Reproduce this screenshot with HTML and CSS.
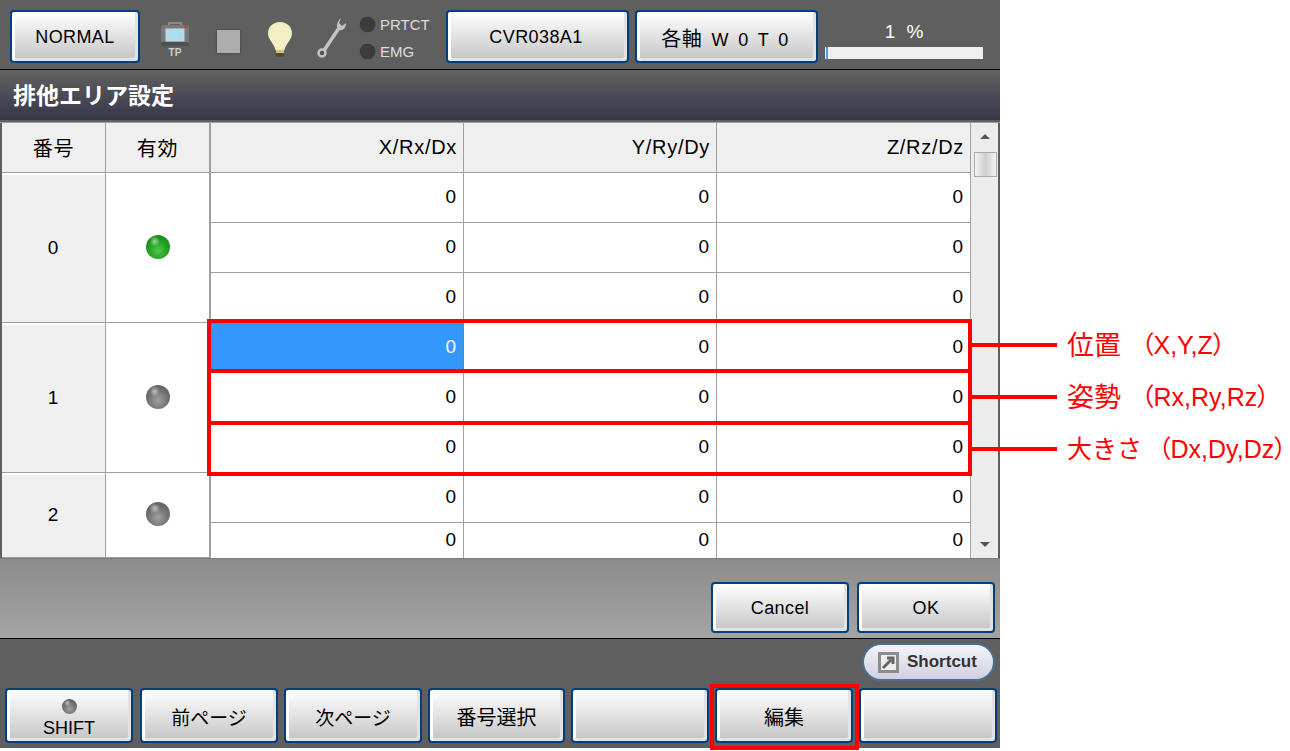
FILE: index.html
```html
<!DOCTYPE html>
<html lang="ja">

<head>
    <meta charset="UTF-8">
    <title>排他エリア設定</title>
    <link rel="stylesheet" href="styles.css">
</head>

<body>
    <div class="screen">
        <!-- Status bar -->
        <div class="status-bar">
            <button class="btn btn-mode">NORMAL</button>
            <div class="icon-tp">
                <svg width="30" height="26" viewBox="0 0 30 26">
                    <path d="M9 4V2H21V4" fill="none" stroke="#8a8a8a" stroke-width="2"/>
                    <rect x="1" y="4" width="28" height="21" rx="3" fill="#787878"/>
                    <rect x="1" y="21" width="28" height="4" rx="2" fill="#4e4e4e"/>
                    <rect x="6" y="8" width="18" height="12" fill="#a8def0" stroke="#d5d5d5"/>
                    <rect x="24" y="4" width="4" height="3" fill="#b04848"/>
                </svg>
                <span>TP</span>
            </div>
            <div class="icon-stop"></div>
            <svg class="icon-bulb" width="26" height="38" viewBox="0 0 26 38">
                <path d="M13 1C6 1 1 6 1 12.500C1 19 7 22 8.500 29H17.500C19 22 25 19 25 12.500C25 6 20 1 13 1Z" fill="#f5efc4"/>
                <rect x="9" y="29" width="8" height="3" fill="#d8c060"/>
                <rect x="9" y="32" width="8" height="4" rx="1" fill="#4a4a3c"/>
            </svg>
            <svg class="icon-wrench" width="30" height="42" viewBox="0 0 30 42">
                <path d="M6 35L22 11" stroke="#c4c4c4" stroke-width="3.500" fill="none"/>
                <path d="M24 1L22 6L25 9L29 6C29 11 26 14 22 13C19 12 19 5 24 1Z" fill="#c4c4c4"/>
                <circle cx="5" cy="36" r="3.500" fill="#555" stroke="#c4c4c4" stroke-width="2.500"/>
            </svg>
            <div class="lamps">
                <div class="lamp"><i></i>PRTCT</div>
                <div class="lamp"><i></i>EMG</div>
            </div>
            <button class="btn btn-job">CVR038A1</button>
            <button class="btn btn-job"><span class="jp">各軸</span> W 0 T 0</button>
            <div class="speed">
                <div class="speed-text">1 %</div>
                <div class="speed-bar"><div class="speed-fill"></div></div>
            </div>
        </div>

        <!-- Title -->
        <h1 class="title">排他エリア設定</h1>

        <!-- Table -->
        <div class="table-wrap">
            <div class="grid">
                <div class="head">番号</div>
                <div class="head head-thick">有効</div>
                <div class="head right">X/Rx/Dx</div>
                <div class="head right">Y/Ry/Dy</div>
                <div class="head right">Z/Rz/Dz</div>

                <div class="no span3">0</div>
                <div class="flag span3"><span class="led led-on"></span></div>
                <div class="val">0</div><div class="val">0</div><div class="val">0</div>
                <div class="val">0</div><div class="val">0</div><div class="val">0</div>
                <div class="val">0</div><div class="val">0</div><div class="val">0</div>

                <div class="no span3">1</div>
                <div class="flag span3"><span class="led"></span></div>
                <div class="val selected">0</div><div class="val">0</div><div class="val">0</div>
                <div class="val">0</div><div class="val">0</div><div class="val">0</div>
                <div class="val">0</div><div class="val">0</div><div class="val">0</div>

                <div class="no span2">2</div>
                <div class="flag span2"><span class="led"></span></div>
                <div class="val">0</div><div class="val">0</div><div class="val">0</div>
                <div class="val last">0</div><div class="val last">0</div><div class="val last">0</div>
            </div>
            <div class="scrollbar">
                <span class="arrow-up"></span>
                <span class="thumb"></span>
                <span class="arrow-down"></span>
            </div>
        </div>

        <!-- Dialog buttons -->
        <div class="dialog-bar">
            <button class="btn btn-dialog">Cancel</button>
            <button class="btn btn-dialog">OK</button>
        </div>

        <!-- Function keys -->
        <div class="bottom-bar">
            <div class="shortcut-row">
                <button class="shortcut">
                    <svg width="21" height="21" viewBox="0 0 21 21">
                        <rect x="1.500" y="1.500" width="18" height="18" fill="#eeeeee" stroke="#8c8c8c" stroke-width="3"/>
                        <path d="M5 16L13 8M9 6H15V12" stroke="#666666" stroke-width="3" fill="none"/>
                    </svg>
                    Shortcut
                </button>
            </div>
            <div class="keys">
                <button class="btn key key-shift"><span class="led led-small"></span>SHIFT</button>
                <button class="btn key key-page">前ページ</button>
                <button class="btn key key-page">次ページ</button>
                <button class="btn key key-narrow">番号選択</button>
                <button class="btn key"></button>
                <button class="btn key">編集</button>
                <button class="btn key"></button>
            </div>
        </div>
    </div>

    <!-- Annotations -->
    <div class="frame frame-1"></div>
    <div class="frame frame-2"></div>
    <div class="frame frame-3"></div>
    <div class="frame frame-key"></div>

    <div class="note note-1">
        <span class="note-line"></span>
        <span class="note-name name-wide">位置</span>
        <span class="note-args">（X,Y,Z）</span>
    </div>
    <div class="note note-2">
        <span class="note-line"></span>
        <span class="note-name name-wide">姿勢</span>
        <span class="note-args">（Rx,Ry,Rz）</span>
    </div>
    <div class="note note-3">
        <span class="note-line"></span>
        <span class="note-name">大きさ</span>
        <span class="note-args">（Dx,Dy,Dz）</span>
    </div>
</body>

</html>
```

FILE: styles.css
```css
/* General Styles */
body {
    margin: 0;
    background-color: #ffffff;
    font-family: "Liberation Sans", "Noto Sans CJK JP", sans-serif;
    color: #000000;
    overflow: hidden;
}

.screen {
    width: 1000px;
    height: 748px;
    background-color: #5f5f5f;
    display: flex;
    flex-direction: column;
}

/* Buttons */
.btn {
    box-sizing: border-box;
    font-family: inherit;
    font-size: 18px;
    letter-spacing: 0.4px;
    color: #000000;
    border: 2px solid #003f7d;
    border-radius: 4px;
    padding: 2px 0 0;
    background: linear-gradient(#ffffff, #c4c4c4);
    box-shadow: inset 3px 0 0 #ffffff, inset -3px -3px 0 #e2e2e2;
}

/* Status bar */
.status-bar {
    box-sizing: border-box;
    height: 70px;
    border-bottom: 1px solid #000000;
    display: flex;
    align-items: flex-start;
    padding: 10px 0 0 10px;
}

.btn-mode {
    width: 130px;
    height: 53px;
}

.icon-tp {
    width: 30px;
    margin: 11px 0 0 20px;
    display: flex;
    flex-direction: column;
    align-items: center;
    color: #d0d0d0;
    font-size: 10px;
    font-weight: bold;
    line-height: 12px;
}

.icon-tp svg {
    display: block;
}

.icon-stop {
    width: 23px;
    height: 23px;
    margin: 20px 0 0 27px;
    background-color: #adadad;
    box-shadow: 0 0 2px #333333;
}

.icon-bulb {
    margin: 11px 0 0 27px;
}

.icon-wrench {
    margin: 7px 0 0 24px;
}

.lamps {
    margin: 1px 0 0 13px;
    width: 86px;
}

.lamp {
    display: flex;
    align-items: center;
    gap: 5px;
    height: 27px;
    font-size: 15px;
    color: #dddddd;
}

.lamp i {
    width: 15px;
    height: 15px;
    border-radius: 50%;
    background-color: #3c3c3c;
    box-shadow: 0 0 1px #222222;
}

.btn-job {
    width: 183px;
    height: 53px;
    margin-right: 6px;
    padding-right: 3px;
    word-spacing: 4px;
}

.jp {
    font-size: 20px;
}

.speed {
    width: 158px;
    margin-left: 1px;
}

.speed-text {
    height: 37px;
    padding-top: 10px;
    box-sizing: border-box;
    text-align: center;
    color: #ffffff;
    font-size: 19px;
    line-height: 24px;
    word-spacing: 6px;
}

.speed-bar {
    height: 12px;
    background-color: #efefef;
}

.speed-fill {
    width: 3px;
    height: 100%;
    border-left: 1px solid #efefef;
    box-sizing: border-box;
    background-color: #5a9be8;
}

/* Title */
.title {
    margin: 0;
    height: 50px;
    padding-left: 13px;
    background: linear-gradient(#626262, #35354a);
    color: #ffffff;
    font-size: 23px;
    font-weight: bold;
    line-height: 52px;
}

/* Table */
.table-wrap {
    margin-top: 2px;
    height: 437px;
    box-sizing: border-box;
    border-top: 1px solid #9f9f9f;
    border-bottom: 1px solid #7a7a7a;
    padding: 0 2px;
    display: flex;
    overflow: hidden;
}

.grid {
    display: grid;
    grid-template-columns: 104px 105px 253px 253px 254px;
    grid-template-rows: repeat(8, 50px) 35px;
    background-color: #ffffff;
}

.head,
.no,
.flag,
.val {
    box-sizing: border-box;
    border-right: 1px solid #a0a0a0;
    border-bottom: 1px solid #a0a0a0;
    display: flex;
    align-items: center;
    justify-content: center;
    font-size: 19px;
    letter-spacing: 1px;
}

.head {
    background-color: #efefef;
    font-size: 20px;
    letter-spacing: 0.7px;
}

.head-thick,
.flag {
    border-right-width: 2px;
}

.right {
    justify-content: flex-end;
    padding-right: 6px;
}

.no {
    background-color: #efefef;
    box-shadow: inset 0 2px 0 #ffffff;
}

.flag {
    background-color: #ffffff;
}

.span3 {
    grid-row: span 3;
}

.span2 {
    grid-row: span 2;
}

.val {
    background-color: #ffffff;
    justify-content: flex-end;
    padding: 0 6px 2px 0;
}

.val.last {
    border-bottom: none;
}

.val.selected {
    background-color: #3399ff;
    color: #ffffff;
    border: 1px dotted #cc6600;
}

.led {
    width: 24px;
    height: 24px;
    margin-bottom: 2px;
    border-radius: 50%;
    background:
        radial-gradient(circle at 36% 26%, rgba(255, 255, 255, 0.55), rgba(255, 255, 255, 0) 22%),
        radial-gradient(circle at 50% 65%, #a0a0a0, #6e6e6e 55%, #5c5c5c 100%);
}

.led-on {
    background:
        radial-gradient(circle at 36% 26%, rgba(255, 255, 255, 0.55), rgba(255, 255, 255, 0) 22%),
        radial-gradient(circle at 50% 65%, #4cc94c, #1f9a1f 55%, #158015 100%);
}

.led-small {
    display: block;
    width: 15px;
    height: 15px;
    margin: 0 auto 3px;
}

/* Scrollbar */
.scrollbar {
    width: 27px;
    background-color: #ececec;
    display: flex;
    flex-direction: column;
    align-items: center;
}

.arrow-up {
    margin-top: 11px;
    border: 5px solid transparent;
    border-top: none;
    border-bottom: 5px solid #555555;
}

.thumb {
    box-sizing: border-box;
    width: 23px;
    height: 25px;
    margin: 13px 0 0 1px;
    border: 1px solid #a9a9a9;
    background: linear-gradient(90deg, #f4f4f4, #cfcfcf 50%, #f4f4f4);
}

.arrow-down {
    margin-top: auto;
    margin-bottom: 11px;
    border: 5px solid transparent;
    border-bottom: none;
    border-top: 5px solid #555555;
}

/* Dialog buttons */
.dialog-bar {
    height: 80px;
    box-sizing: border-box;
    border-bottom: 1px solid #000000;
    background: linear-gradient(#8c8c8c, #a4a4a4);
    display: flex;
    justify-content: flex-end;
    gap: 8px;
    padding: 23px 5px 0 0;
}

.btn-dialog {
    width: 138px;
    height: 51px;
}

/* Bottom bar */
.shortcut-row {
    display: flex;
    justify-content: flex-end;
    padding: 4px 5px 0 0;
}

.shortcut {
    box-sizing: border-box;
    width: 133px;
    height: 38px;
    border: 2px solid #4a6f96;
    border-radius: 19px;
    padding: 0 0 0 14px;
    background: linear-gradient(#f4f4fa, #d0d0e0);
    display: flex;
    align-items: center;
    gap: 8px;
    font-family: inherit;
    font-size: 17px;
    font-weight: bold;
    color: #333333;
}

.keys {
    display: flex;
    gap: 6px;
    margin-top: 7px;
    padding-left: 5px;
}

.key {
    width: 138px;
    height: 55px;
    font-size: 20px;
    letter-spacing: 0;
}

.key-page {
    font-size: 19px;
}

.key-shift {
    width: 128px;
    margin-right: 1px;
    padding-top: 6px;
    font-size: 18px;
    line-height: 22px;
}

.key-narrow {
    width: 137px;
}

/* Annotations */
.frame {
    position: absolute;
    box-sizing: border-box;
    border: 4px solid #ff0000;
}

.frame-1 {
    left: 207px;
    top: 319px;
    width: 765px;
    height: 54px;
}

.frame-2 {
    left: 207px;
    top: 369px;
    width: 765px;
    height: 56px;
}

.frame-3 {
    left: 207px;
    top: 421px;
    width: 765px;
    height: 55px;
}

.frame-key {
    left: 710px;
    top: 684px;
    width: 149px;
    height: 66px;
}

.note {
    position: absolute;
    left: 972px;
    display: flex;
    align-items: center;
    height: 32px;
    color: #ff0000;
    white-space: nowrap;
}

.note-line {
    width: 85px;
    height: 4px;
    margin-right: 10px;
    background-color: #ff0000;
}

.note-name {
    margin-bottom: 4px;
    font-size: 25px;
}

.name-wide {
    font-size: 27px;
}

.note-args {
    margin: 0 0 4px 16px;
    font-size: 25px;
    font-feature-settings: "palt";
}

.name-wide + .note-args {
    margin-left: 20px;
}

.note-1 {
    top: 329px;
}

.note-2 {
    top: 381px;
}

.note-3 {
    top: 433px;
}
```
